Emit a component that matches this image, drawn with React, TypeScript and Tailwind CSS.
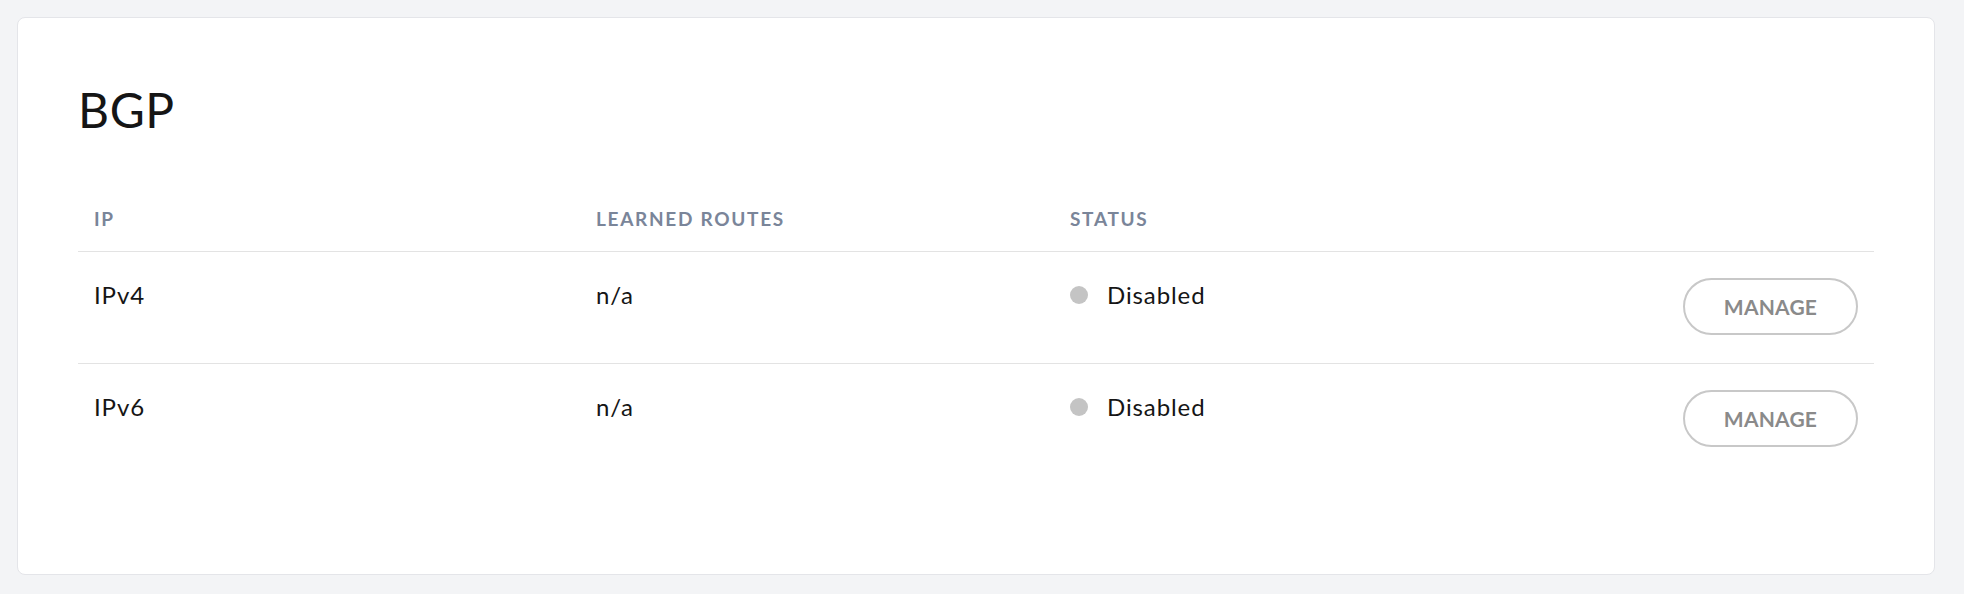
import React from "react";

const rows = [
  { ip: "IPv4", routes: "n/a", status: "Disabled" },
  { ip: "IPv6", routes: "n/a", status: "Disabled" },
];

export default function App() {
  return (
    <div
      className="min-h-[594px] w-full bg-[#f3f4f6] pl-[17px] pr-[29px] pt-[17px] pb-[19px]"
      style={{ fontFamily: "Lato, 'Open Sans', sans-serif" }}
    >
      <div className="rounded-[8px] border border-[#e4e5e9] bg-white px-[60px] pt-[64px] pb-[99px]">
        <h1 className="mb-[69px] text-[48px] font-normal leading-[56px] tracking-[0.6px] text-[#151515]">BGP</h1>
        <div className="grid grid-cols-[502px_474px_1fr_auto] pb-[20px] text-[19px] font-bold uppercase leading-[24px] tracking-[1.7px] text-[#7a8599]">
          <div className="pl-[16px]">IP</div>
          <div className="pl-[16px]">Learned Routes</div>
          <div className="pl-[16px]">Status</div>
          <div />
        </div>
        {rows.map((r) => (
          <div
            key={r.ip}
            className="grid grid-cols-[502px_474px_1fr_auto] border-t border-[#e3e3e3] pt-[26px] pb-[28px] text-[24px] leading-[34px] tracking-[0.9px] text-[#151515]"
          >
            <div className="pl-[16px]">{r.ip}</div>
            <div className="pl-[16px]">{r.routes}</div>
            <div className="flex items-start pl-[16px]">
              <div className="flex h-[34px] items-center">
                <span className="mr-[19px] h-[18px] w-[18px] rounded-full bg-[#c4c4c4]" />
                <span>{r.status}</span>
              </div>
            </div>
            <div className="pr-[16px]">
              <button className="flex h-[57px] w-[175px] items-center justify-center rounded-full border-2 border-[#c8c8c8] bg-white text-[21px] font-bold tracking-[0.2px] text-[#8a8a8a]">
                MANAGE
              </button>
            </div>
          </div>
        ))}
      </div>
    </div>
  );
}
